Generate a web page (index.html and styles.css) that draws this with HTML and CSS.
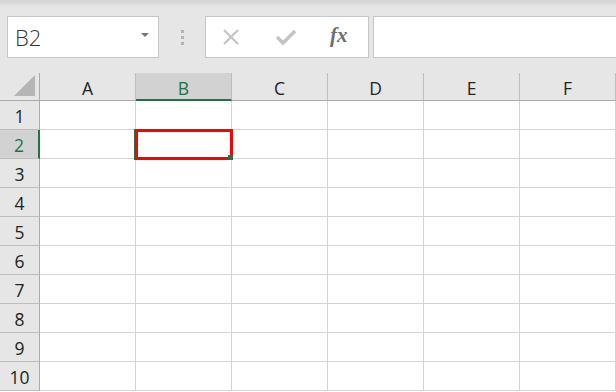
FILE: index.html
```html
<!DOCTYPE html>
<html lang="en">
<head>
    <meta charset="UTF-8">
    <title>Sheet1</title>
    <link rel="stylesheet" href="styles.css">
</head>
<body>
    <div class="toolbar">
        <div class="name-box">
            <span>B2</span>
            <span class="caret"></span>
        </div>
        <div class="grip">
            <span></span><span></span><span></span>
        </div>
        <div class="formula-buttons">
            <svg class="btn-icon" width="20" height="20" viewBox="0 0 20 20">
                <path d="M3 3 L17 17 M17 3 L3 17" stroke="#c4c4c4" stroke-width="2.2" fill="none"/>
            </svg>
            <svg class="btn-icon" width="22" height="20" viewBox="0 0 22 20">
                <path d="M2 10 L8 16 L20 4" stroke="#c4c4c4" stroke-width="3.4" fill="none"/>
            </svg>
            <span class="fx">fx</span>
        </div>
        <div class="formula-input"></div>
    </div>

    <div class="sheet">
        <div class="corner">
            <svg width="22" height="22" viewBox="0 0 22 22">
                <polygon points="21,0 21,21 0,21" fill="#b5b5b5"/>
            </svg>
        </div>
        <div class="col-head">A</div>
        <div class="col-head active">B</div>
        <div class="col-head">C</div>
        <div class="col-head">D</div>
        <div class="col-head">E</div>
        <div class="col-head">F</div>

        <div class="row-head">1</div>
        <div class="cell"></div><div class="cell"></div><div class="cell"></div><div class="cell"></div><div class="cell"></div><div class="cell"></div>

        <div class="row-head active">2</div>
        <div class="cell"></div><div class="cell selected"><span class="handle"></span></div><div class="cell"></div><div class="cell"></div><div class="cell"></div><div class="cell"></div>

        <div class="row-head">3</div>
        <div class="cell"></div><div class="cell"></div><div class="cell"></div><div class="cell"></div><div class="cell"></div><div class="cell"></div>

        <div class="row-head">4</div>
        <div class="cell"></div><div class="cell"></div><div class="cell"></div><div class="cell"></div><div class="cell"></div><div class="cell"></div>

        <div class="row-head">5</div>
        <div class="cell"></div><div class="cell"></div><div class="cell"></div><div class="cell"></div><div class="cell"></div><div class="cell"></div>

        <div class="row-head">6</div>
        <div class="cell"></div><div class="cell"></div><div class="cell"></div><div class="cell"></div><div class="cell"></div><div class="cell"></div>

        <div class="row-head">7</div>
        <div class="cell"></div><div class="cell"></div><div class="cell"></div><div class="cell"></div><div class="cell"></div><div class="cell"></div>

        <div class="row-head">8</div>
        <div class="cell"></div><div class="cell"></div><div class="cell"></div><div class="cell"></div><div class="cell"></div><div class="cell"></div>

        <div class="row-head">9</div>
        <div class="cell"></div><div class="cell"></div><div class="cell"></div><div class="cell"></div><div class="cell"></div><div class="cell"></div>

        <div class="row-head">10</div>
        <div class="cell"></div><div class="cell"></div><div class="cell"></div><div class="cell"></div><div class="cell"></div><div class="cell"></div>
    </div>
</body>
</html>
```

FILE: styles.css
```css
body {
    margin: 0;
    width: 616px;
    height: 392px;
    overflow: hidden;
    background-color: #ffffff;
    font-family: "Open Sans", "Noto Sans", sans-serif;
    color: #222;
}
.toolbar {
    display: flex;
    align-items: flex-start;
    height: 73px;
    box-sizing: border-box;
    padding: 16px 0 0 7px;
    background: linear-gradient(to bottom, #d3d3d3 0px, #dcdcdc 4px, #e6e6e6 7px, #e6e6e6 100%);
}
.name-box {
    width: 152px;
    height: 42px;
    box-sizing: border-box;
    border: 1px solid #c6c6c6;
    background-color: #fff;
    display: flex;
    align-items: center;
    justify-content: space-between;
    padding: 0 9px 0 7px;
    font-size: 22px;
    font-weight: 300;
    color: #333;
}
.caret {
    width: 0;
    height: 0;
    border-left: 4px solid transparent;
    border-right: 4px solid transparent;
    border-top: 4px solid #777;
    margin-top: -4px;
}
.grip {
    width: 46px;
    height: 42px;
    display: flex;
    flex-direction: column;
    align-items: center;
    justify-content: center;
    gap: 3px;
}
.grip span {
    width: 3px;
    height: 3px;
    background-color: #b4b4b4;
}
.formula-buttons {
    width: 164px;
    height: 42px;
    box-sizing: border-box;
    border: 1px solid #c6c6c6;
    background-color: #fff;
    display: flex;
    align-items: center;
    padding-left: 15px;
}
.formula-buttons .btn-icon:first-child {
    margin-right: 34px;
}
.formula-buttons .btn-icon:nth-child(2) {
    margin-right: 33px;
}
.fx {
    font-family: "Liberation Serif", "DejaVu Serif", serif;
    font-style: italic;
    font-weight: bold;
    font-size: 21px;
    color: #6f6f6f;
    margin-top: -4px;
}
.formula-input {
    flex: 1;
    height: 42px;
    margin-left: 4px;
    box-sizing: border-box;
    border: 1px solid #c6c6c6;
    border-right: none;
    background-color: #fff;
}
.sheet {
    display: grid;
    grid-template-columns: 40px repeat(6, 96px);
    grid-template-rows: 28px repeat(10, 29px);
    font-size: 17.5px;
}
.corner {
    background-color: #e6e6e6;
    border-right: 1px solid #ababab;
    border-bottom: 1px solid #ababab;
    display: flex;
    align-items: flex-end;
    justify-content: flex-end;
    padding: 0 3px 3px 0;
}
.col-head {
    background-color: #e6e6e6;
    border-right: 1px solid #bdbdbd;
    border-bottom: 1px solid #ababab;
    display: flex;
    align-items: center;
    justify-content: center;
    padding-top: 3px;
    box-sizing: border-box;
}
.col-head.active {
    background-color: #d2d2d2;
    color: #217346;
    border-bottom: 2px solid #217346;
    padding-top: 4px;
}
.row-head {
    background-color: #e6e6e6;
    border-right: 1px solid #ababab;
    border-bottom: 1px solid #bdbdbd;
    display: flex;
    align-items: center;
    justify-content: center;
    padding-top: 2px;
    box-sizing: border-box;
}
.row-head.active {
    background-color: #d2d2d2;
    color: #217346;
    border-right: 2px solid #217346;
}
.cell {
    border-right: 1px solid #d4d4d4;
    border-bottom: 1px solid #d4d4d4;
    background-color: #fff;
}
.cell.selected {
    position: relative;
}
.cell.selected::after {
    content: "";
    position: absolute;
    left: -1px;
    top: -1px;
    right: -2px;
    bottom: -2px;
    border: 3px solid #ff0000;
    box-shadow: -1px 0 0 #217346;
}
.handle {
    position: absolute;
    right: -2px;
    bottom: -2px;
    width: 5px;
    height: 5px;
    background-color: #217346;
    z-index: 1;
}
```
